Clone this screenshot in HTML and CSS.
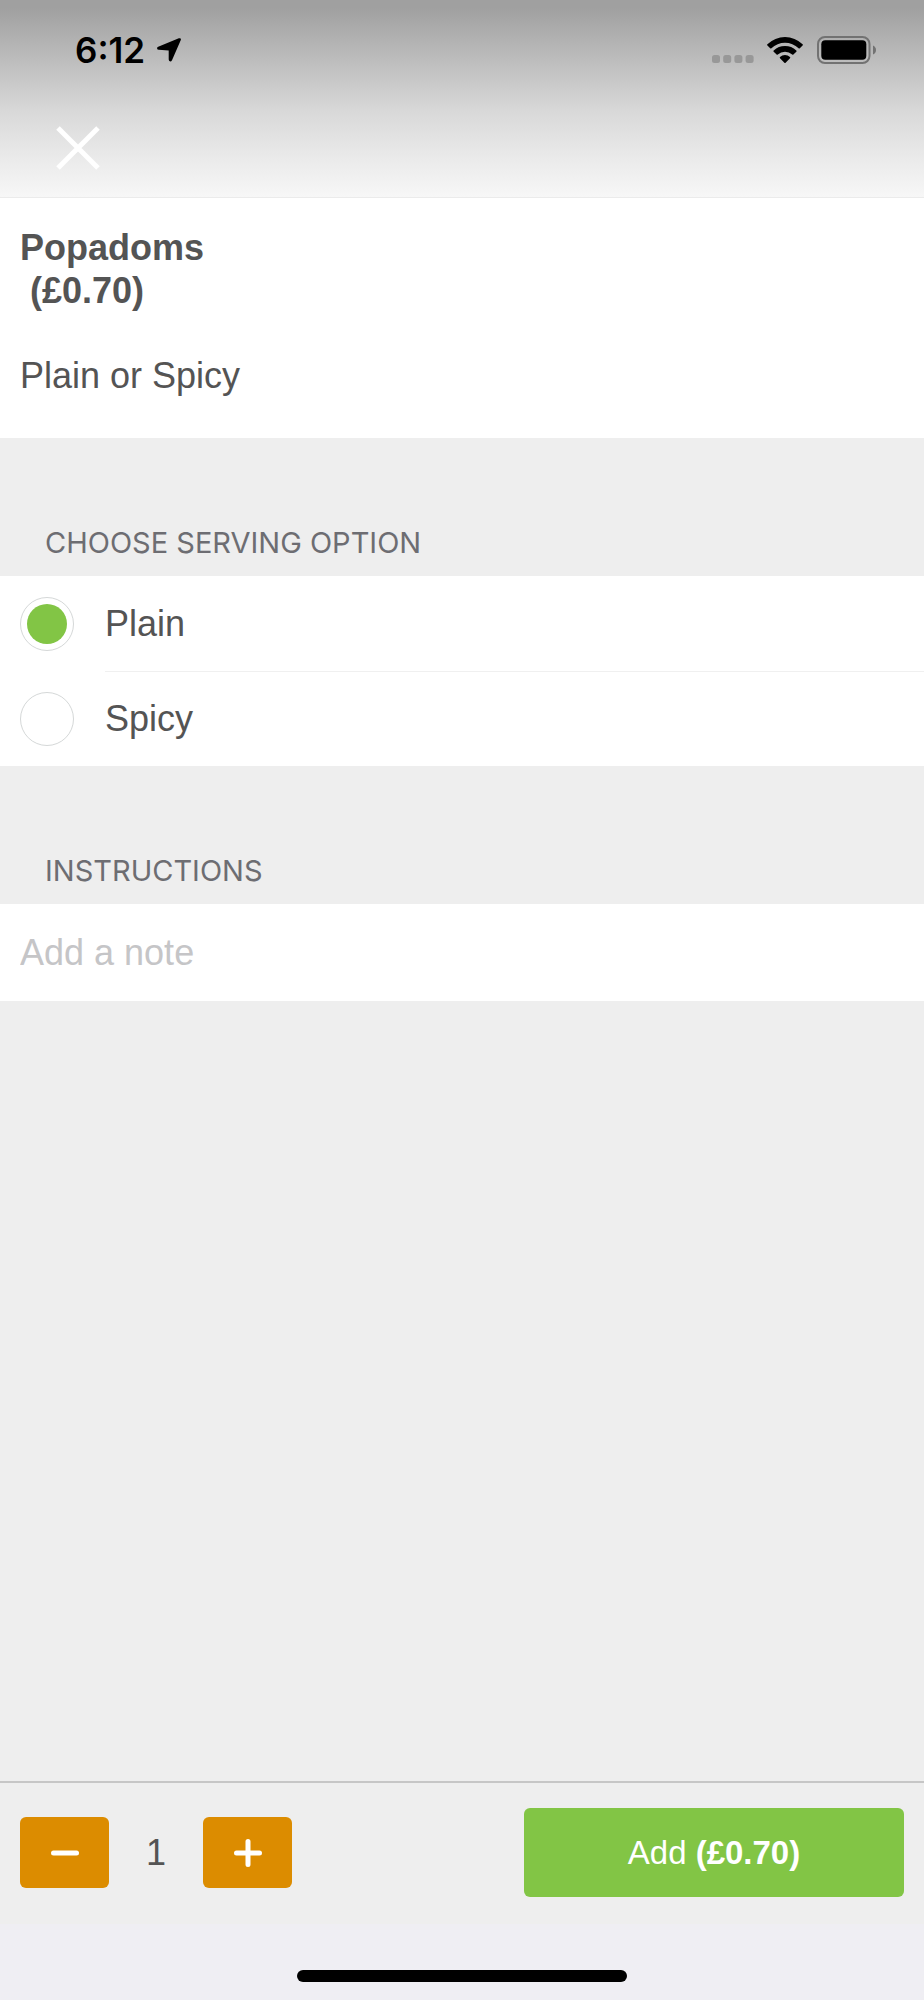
FILE: index.html
```html
<!DOCTYPE html>
<html lang="en">
<head>
<meta charset="utf-8">
<meta name="viewport" content="width=device-width, initial-scale=1">
<title>Popadoms</title>
<link rel="stylesheet" href="styles.css">
</head>
<body>
<div class="screen">
  <header class="top">
    <div class="status">
      <span class="time">6:12</span>
      <svg class="location" width="24" height="24" viewBox="0 0 24 24" aria-hidden="true"><path d="M1.200 8.800 21.800.3Q24.600-.4 23.700 2.300L15 22.200Q14.400 23.400 13.200 23.400 11.700 23.200 11.700 21.600V12.500L1.800 11.800Q.2 11.600.1 10.400 0 9.300 1.200 8.800Z"/></svg>
      <svg class="dots" width="42" height="8" viewBox="0 0 42 8" aria-hidden="true"><g fill="#989898"><rect width="8" height="8" rx="2.500"/><rect x="11.200" width="8" height="8" rx="2.500"/><rect x="22.400" width="8" height="8" rx="2.500"/><rect x="33.600" width="8" height="8" rx="2.500"/></g></svg>
      <svg class="wifi" width="36" height="27" viewBox="0 0 36 27" aria-hidden="true"><path d="M.4 7.200Q-.2 7.800.4 8.400L3.200 11.200Q3.800 11.700 4.400 11.200A19.600 19.600 0 0 1 31.600 11.200Q32.200 11.700 32.800 11.200L35.600 8.400Q36.200 7.800 35.600 7.200A25.300 25.300 0 0 0 .4 7.200ZM6.700 13.600Q6.100 14.200 6.700 14.800L9.600 17.500Q10.200 18 10.800 17.500A10.600 10.600 0 0 1 25.200 17.500Q25.800 18 26.400 17.500L29.300 14.800Q29.900 14.200 29.300 13.600A16.500 16.500 0 0 0 6.700 13.600ZM13 20Q12.500 20.600 13 21.200L17.400 25.800Q18 26.400 18.600 25.800L23 21.200Q23.500 20.600 23 20A7.600 7.600 0 0 0 13 20Z"/></svg>
      <svg class="battery" width="60" height="28" viewBox="0 0 60 28" aria-hidden="true"><rect x="1" y="1" width="51.500" height="26" rx="7" fill="none" stroke="#727272" stroke-width="2"/><rect x="4.300" y="4.300" width="45" height="19.400" rx="4"/><path d="M56 9.500V18.500Q59 17 59 14T56 9.500Z" fill="#727272"/></svg>
    </div>
    <button class="close" type="button" aria-label="Close"><svg width="44" height="44" viewBox="0 0 44 44" aria-hidden="true"><path d="M2 2 42 42M42 2 2 42" stroke="#fff" stroke-width="5"/></svg></button>
  </header>
  <main class="content">
    <section class="item">
      <h1 class="item-title">Popadoms<span class="item-price">(£0.70)</span></h1>
      <p class="item-text">Plain or Spicy</p>
    </section>
    <h2 class="heading" id="serving">Choose serving option</h2>
    <div class="options" role="radiogroup" aria-labelledby="serving">
      <label class="option"><input class="radio" type="radio" name="serving" checked><span class="option-name">Plain</span></label>
      <label class="option"><input class="radio" type="radio" name="serving"><span class="option-name">Spicy</span></label>
    </div>
    <h2 class="heading"><label for="note">Instructions</label></h2>
    <input class="note" id="note" type="text" placeholder="Add a note">
  </main>
  <footer class="bar">
    <button class="step" type="button" aria-label="Decrease quantity"><svg width="30" height="30" viewBox="0 0 30 30" aria-hidden="true"><path d="M3.500 15H26.500"/></svg></button>
    <output class="count">1</output>
    <button class="step" type="button" aria-label="Increase quantity"><svg width="30" height="30" viewBox="0 0 30 30" aria-hidden="true"><path d="M3.500 15H26.500M15 3.500V26.500"/></svg></button>
    <button class="add" type="button">Add <b>(£0.70)</b></button>
  </footer>
  <div class="safe-area"><div class="home"></div></div>
</div>
</body>
</html>
```

FILE: styles.css
```css
* {
  box-sizing: border-box;
}

body {
  margin: 0;
  background: #eee;
  color: #545454;
  font-family: "Liberation Sans", Arial, sans-serif;
  font-size: 36px;
  line-height: 43px;
}

button,
input {
  font: inherit;
}

button {
  display: flex;
  align-items: center;
  justify-content: center;
  padding: 0;
  border: 0;
}

svg {
  display: block;
  flex: none;
}

.screen {
  display: flex;
  flex-direction: column;
  min-height: 100vh;
}

.top {
  padding-bottom: 11px;
  border-bottom: 1px solid #ebebeb;
  background: linear-gradient(#a0a0a0 0, #a0a0a0 4%, #b9b9b9 27%, #d8d8d8 56%, #eaeaea 80%, #f7f7f7 100%);
}

.status {
  display: flex;
  align-items: center;
  height: 100px;
  padding: 0 47px 0 75px;
}

.time {
  color: #000;
  font-family: Inter, sans-serif;
  font-size: 35px;
  font-weight: 600;
}

.location {
  margin-left: 12px;
}

.dots {
  margin: 18px 13px 0 auto;
}

.battery {
  margin-left: 14px;
}

.close {
  width: 76px;
  height: 76px;
  margin: 10px 0 0 40px;
  background: none;
}

.content {
  flex: 1;
}

.item {
  padding: 28px 20px;
  background: #fff;
}

.item-title,
.item-text {
  margin: 0;
  font-size: 36px;
}

.item-price {
  display: block;
  padding-left: 10px;
}

.item-text {
  padding: 42px 0 13px;
}

.heading {
  display: flex;
  align-items: flex-end;
  height: 138px;
  margin: 0;
  padding: 0 45px 12px;
  color: #6d6d72;
  font-family: Inter, sans-serif;
  font-size: 29px;
  font-weight: 400;
  text-transform: uppercase;
}

.options {
  background: #fff;
}

.option {
  display: flex;
  align-items: center;
  padding-left: 20px;
}

.radio {
  flex: none;
  width: 54px;
  height: 54px;
  margin: 0 31px 0 0;
  padding: 6px;
  border: 1px solid #d5d8d8;
  border-radius: 50%;
  appearance: none;
  background: #fff content-box;
}

.radio:checked {
  background-color: #82c545;
}

.option-name {
  flex: 1;
  padding: 26px 0;
}

.option + .option .option-name {
  border-top: 1px solid #f0f0f0;
  padding-top: 25px;
}

.note {
  display: block;
  width: 100%;
  height: 97px;
  padding: 0 20px;
  border: 0;
  background: #fff;
  color: #545454;
}

.note::placeholder {
  color: #c5c5c7;
}

.bar {
  display: flex;
  align-items: center;
  padding: 25px 20px 27px;
  border-top: 2px solid #c6c6c6;
}

.step {
  width: 89px;
  height: 71px;
  border-radius: 6px;
  background: #dc8c00;
  fill: none;
  stroke: #fff;
  stroke-width: 5;
  stroke-linecap: round;
}

.count {
  width: 94px;
  text-align: center;
}

.add {
  flex: 0 1 380px;
  height: 89px;
  margin-left: auto;
  border-radius: 6px;
  background: #82c545;
  color: #fff;
  font-size: 33px;
  white-space: pre;
}

.safe-area {
  display: flex;
  justify-content: center;
  padding: 46px 0 18px;
  background: #efeef3;
}

.home {
  width: 330px;
  height: 12px;
  border-radius: 6px;
  background: #000;
}
```
